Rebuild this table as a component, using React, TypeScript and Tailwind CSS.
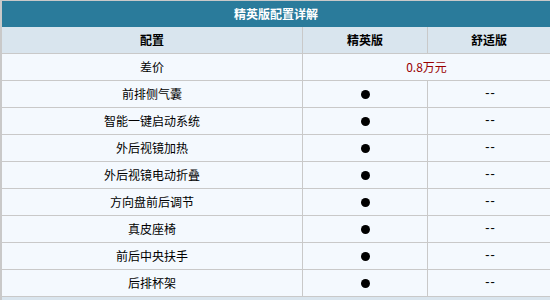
const features = [
  "前排侧气囊",
  "智能一键启动系统",
  "外后视镜加热",
  "外后视镜电动折叠",
  "方向盘前后调节",
  "真皮座椅",
  "前后中央扶手",
  "后排杯架",
];

const font = { fontFamily: '"Noto Sans CJK SC", "Noto Sans", sans-serif' };

const Row = ({ children, head }: { children: React.ReactNode; head?: boolean }) => (
  <div
    className={`flex h-[27px] border-b border-[#c9c9c9] ${head ? "bg-[#d9e5ee]" : "bg-[#f4f9fe]"}`}
  >
    {children}
  </div>
);

export default function App() {
  return (
    <div className="w-[550px] h-[300px] overflow-hidden bg-white" style={font}>
      <div className="w-[560px] border-t border-l-2 border-[#c9c9c9] text-[12px] leading-none text-black">
        <div className="h-[26px] bg-[#2a7b9b] flex items-center text-white font-bold">
          <div className="w-[548px] text-center">精英版配置详解</div>
        </div>
        <Row head>
          <div className="w-[300px] flex items-center justify-center font-bold">配置</div>
          <div className="w-[125px] border-l border-[#c9c9c9] flex items-center justify-center font-bold">精英版</div>
          <div className="w-[123px] border-l border-[#c9c9c9] flex items-center justify-center font-bold">舒适版</div>
        </Row>
        <Row>
          <div className="w-[300px] flex items-center justify-center">差价</div>
          <div className="w-[248px] border-l border-[#c9c9c9] flex items-center justify-center text-[#990000]">0.8万元</div>
        </Row>
        {features.map((f) => (
          <Row key={f}>
            <div className="w-[300px] flex items-center justify-center">{f}</div>
            <div className="w-[125px] border-l border-[#c9c9c9] flex items-center justify-center">
              <span className="w-[9px] h-[9px] rounded-full bg-black" />
            </div>
            <div className="w-[123px] border-l border-[#c9c9c9] flex items-center justify-center font-['Liberation_Mono',monospace] tracking-[-2px]">--</div>
          </Row>
        ))}
        <Row head>
          <div className="w-[300px]" />
        </Row>
      </div>
    </div>
  );
}
